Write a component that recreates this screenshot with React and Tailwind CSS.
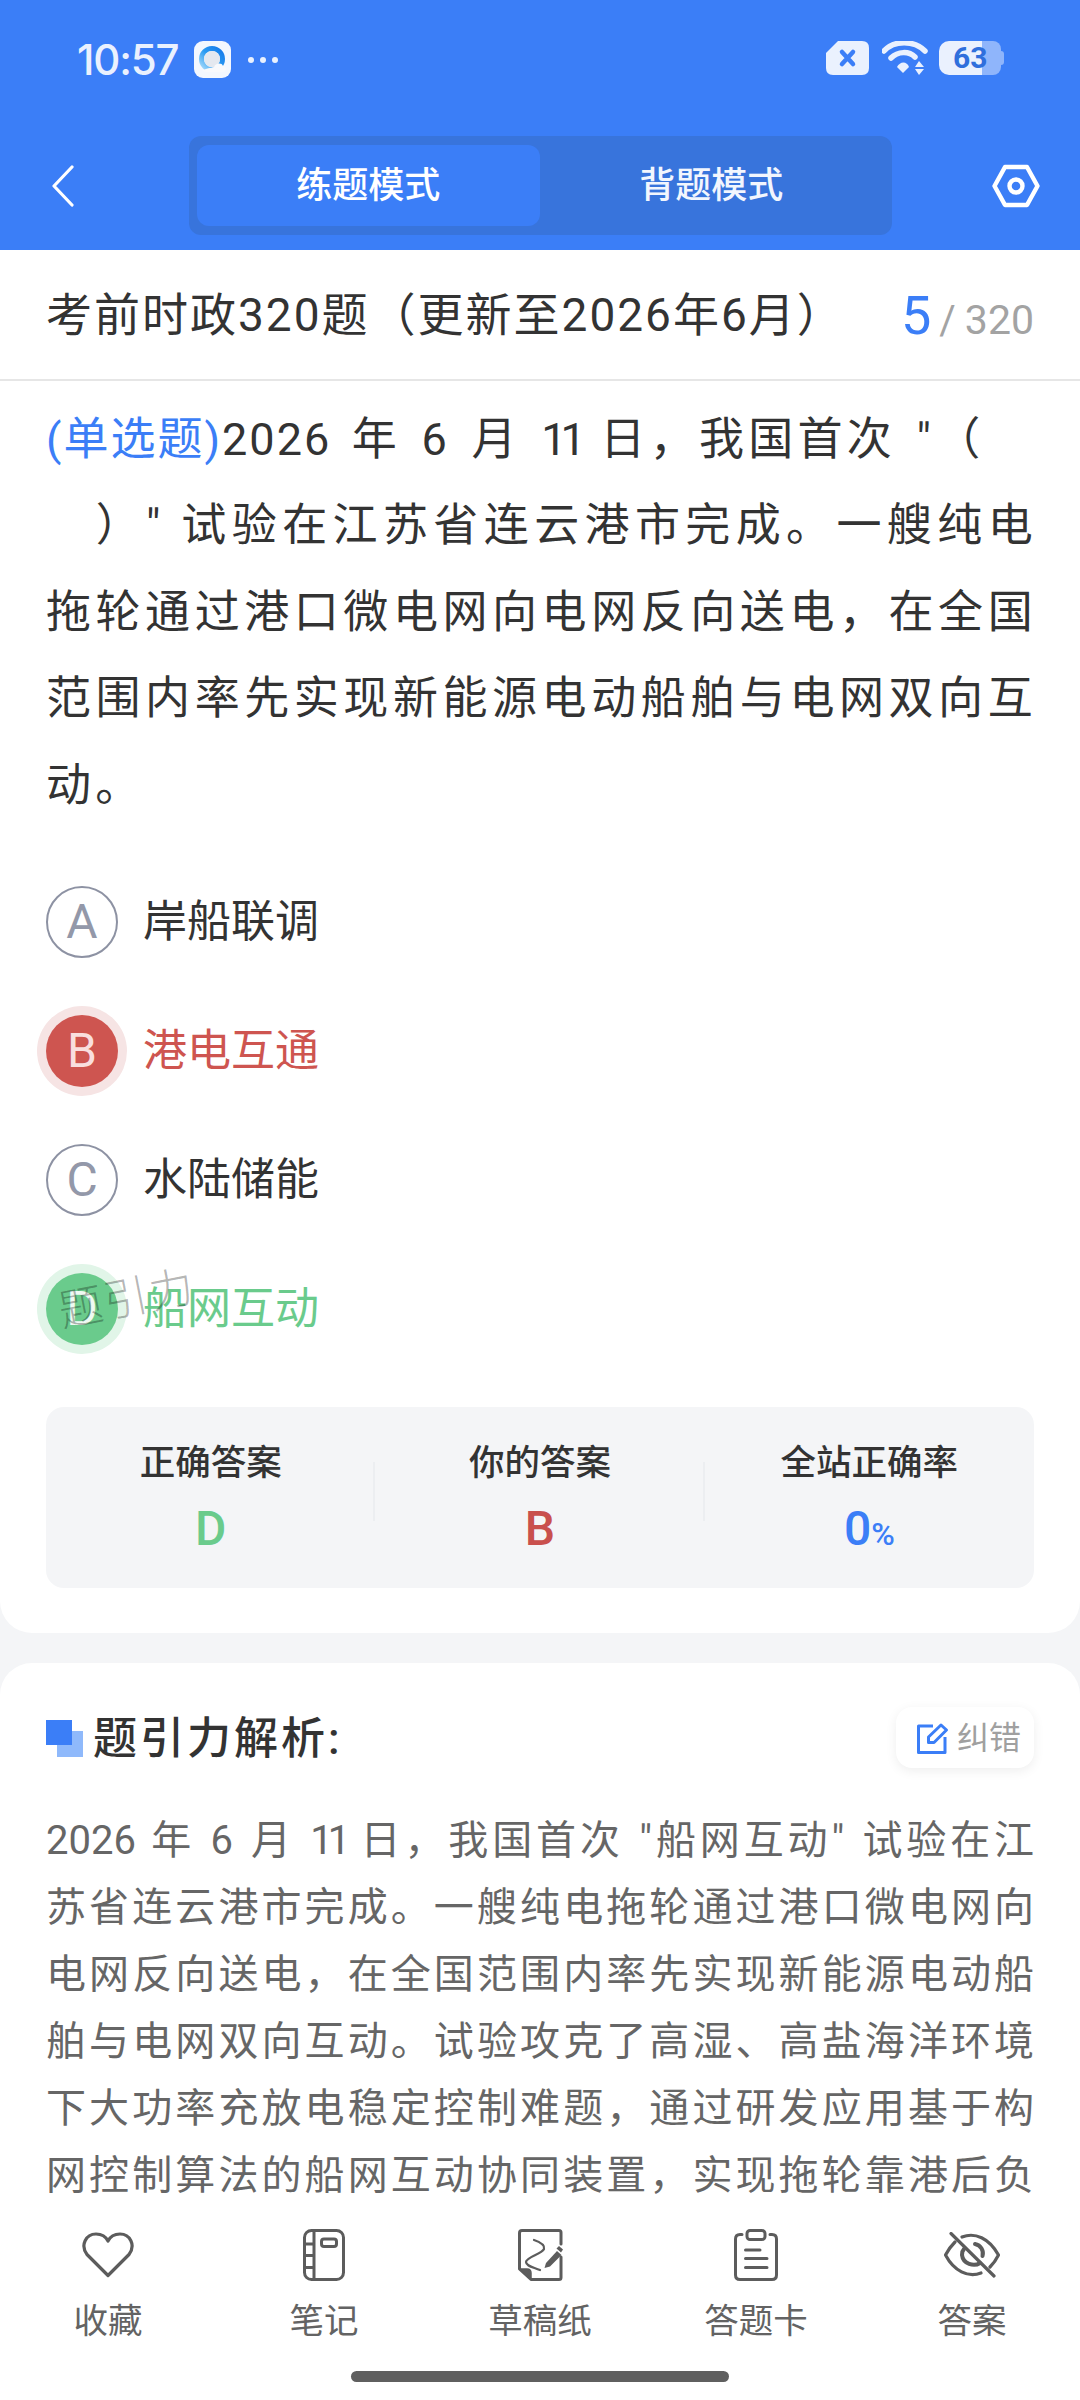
import React from 'react';

const FONT = "font-['Roboto','Noto_Sans_CJK_SC',sans-serif]";

function QQLogo() {
  return (
    <svg width="37" height="37" viewBox="0 0 37 37">
      <defs>
        <linearGradient id="ring" x1="0" y1="1" x2="1" y2="0">
          <stop offset="0" stopColor="#a9dcfb" />
          <stop offset="0.5" stopColor="#2a9bf2" />
          <stop offset="1" stopColor="#1579ea" />
        </linearGradient>
      </defs>
      <rect width="37" height="37" rx="9" fill="#f3f7fe" />
      <circle cx="18" cy="18" r="10.5" fill="none" stroke="url(#ring)" strokeWidth="5" />
      <circle cx="18" cy="18" r="8" fill="#e4e8ef" />
      <path d="M8 30 C12 27 17 27 20 26 C21 22 28 21 29 25 C33 25 33 31 29 31 L12 31 Z" fill="#f8f9fc" />
    </svg>
  );
}

function StatusRight() {
  return (
    <div className="flex items-center">
      <svg width="43" height="34" viewBox="0 0 43 34">
        <path d="M12 0 H36 Q43 0 43 7 V27 Q43 34 36 34 H7 Q0 34 0 27 V12 Z" fill="#eaf1fe" />
        <path d="M16 11 L27 23 M27 11 L16 23" stroke="#3b7ef7" strokeWidth="4.5" strokeLinecap="round" />
      </svg>
      <svg className="ml-[13px]" width="46" height="34" viewBox="0 0 46 34" fill="none">
        <path d="M2 10 C12 -1 32 -1 43 10" stroke="#eaf1fe" strokeWidth="5.5" strokeLinecap="round" />
        <path d="M9 17 C16 10 27 10 33 16" stroke="#eaf1fe" strokeWidth="5.5" strokeLinecap="round" />
        <path d="M15 26 C18 20 25 20 27 26 L21 32 Z" fill="#eaf1fe" />
        <path d="M37 20 L42 26 H33 Z M33 28 H42 L37 34 Z" fill="#eaf1fe" />
      </svg>
      <div className="relative ml-[11px] flex h-[34px] w-[65px] items-center">
        <div className="h-full w-[43px] rounded-l-[10px] bg-[#eaf1fe]" />
        <div className="h-full w-[19px] rounded-r-[8px] bg-[#8fb5fb]" />
        <div className="h-[14px] w-[3px] rounded-r-sm bg-[#8fb5fb]" />
        <span className="absolute left-[14px] top-0 text-[30px] leading-[34px] font-bold text-[#2f6fdc]">63</span>
      </div>
    </div>
  );
}

function HeartIcon() {
  return (
    <svg width="52" height="46" viewBox="0 0 52 46" fill="none" stroke="#5c5c5c" strokeWidth="3.2" strokeLinejoin="round">
      <path d="M26 43.5 L5 22.5 C-2 13 4 2 14 2 C20 2 24 5 26 9 C28 5 32 2 38 2 C48 2 54 13 47 22.5 Z" />
    </svg>
  );
}

function NotebookIcon() {
  return (
    <svg width="42" height="52" viewBox="0 0 42 52" fill="none" stroke="#5c5c5c" strokeWidth="3">
      <rect x="1.5" y="1.5" width="39" height="49" rx="7" />
      <path d="M11 2 V50 M2 15 H11 M2 26.5 H11 M2 38.5 H11" />
      <rect x="18.5" y="10" width="15" height="7.5" rx="2.5" />
    </svg>
  );
}

function DraftIcon() {
  return (
    <svg width="45" height="52" viewBox="0 0 45 52" fill="none" stroke="#5c5c5c" strokeWidth="3" strokeLinecap="round" strokeLinejoin="round">
      <path d="M43 15 V3.5 Q43 1.5 41 1.5 H4 Q1.5 1.5 1.5 4 V40 L13 50.5 H41 Q43 50.5 43 48.5 V28" />
      <path d="M1.5 40 H9 Q13 40 13 44 V50.5 Z" fill="#5c5c5c" strokeWidth="1.5" />
      <path d="M16 11 C22 13 27 16 26 20 C24 25 8 28 8 33 C8 37 15 38 22 41" strokeWidth="2.2" />
      <path d="M28 34 L39 22 L43.5 26 L32 37.5 L26.5 39 Z" fill="#5c5c5c" stroke="none" />
      <path d="M38.5 19.5 L41 17 L45 20.5 L43 23.5 Z" fill="#5c5c5c" stroke="none" />
    </svg>
  );
}

function ClipboardIcon() {
  return (
    <svg width="44" height="52" viewBox="0 0 44 52" fill="none" stroke="#5c5c5c" strokeWidth="3" strokeLinecap="round">
      <rect x="13" y="1.5" width="18" height="9" rx="3" />
      <path d="M8 5.5 H6 Q1.5 5.5 1.5 10 V46 Q1.5 50.5 6 50.5 H38 Q42.5 50.5 42.5 46 V10 Q42.5 5.5 38 5.5 H36" />
      <path d="M11.5 21 H26 M11.5 29.5 H33 M11.5 38.5 H33" />
    </svg>
  );
}

function EyeOffIcon() {
  return (
    <svg width="56" height="46" viewBox="0 0 56 46" fill="none" stroke="#5c5c5c" strokeWidth="3.2" strokeLinecap="round" strokeLinejoin="round">
      <path d="M18 5 C31 -0 45 6 54.5 23 C52 28 49 32 46 35 M37 41 C24 46 10 39 1.5 23 C4 18 7 14 11 10" />
      <path d="M31 12 C37 13 40 19 38.5 24 M36 31 C30 35 19 32 18 23 C18 20 19 18 20 17" strokeWidth="4" />
      <path d="M7 1.5 L50 44" />
    </svg>
  );
}

function EditIcon() {
  return (
    <svg width="32" height="32" viewBox="0 0 32 32" fill="none" stroke="#3b7ef7" strokeWidth="3" strokeLinejoin="round">
      <path d="M16 4 H1.5 V30.5 H28 V15" />
      <path d="M11.5 15 L24 3 L29.5 8 L17 20.5 H11.5 Z" />
    </svg>
  );
}

function Option({ letter, text, state }) {
  let circle = 'border-2 border-[#8d92a3] text-[#9398a9] bg-white';
  let label = 'text-[#333333]';
  if (state === 'wrong') {
    circle = 'bg-[#ce5550] text-[#f9dede] ring-[9px] ring-[#f6e4e4]';
    label = 'text-[#ce5550]';
  }
  if (state === 'right') {
    circle = 'bg-[#6acb8c] text-[#eefaf2] ring-[9px] ring-[#e1f5e8]';
    label = 'text-[#6acb8c]';
  }
  return (
    <div className="flex h-[129px] items-center">
      <div className={`flex h-[72px] w-[72px] items-center justify-center rounded-full text-[48px] ${circle}`}>
        {letter}
      </div>
      <span className={`ml-[25px] text-[44px] ${label}`}>{text}</span>
    </div>
  );
}

function Stat({ label, children, divider }) {
  return (
    <div className="relative flex flex-col items-center">
      <div className="text-[35.5px] leading-[46px] font-medium text-[#333333]">{label}</div>
      <div className="mt-[18px] h-[50px] text-[48px] leading-[50px] font-medium">{children}</div>
      {divider && <div className="absolute right-0 top-[22px] h-[59px] w-[2px] bg-[#eceef1]" />}
    </div>
  );
}

function TabItem({ icon, label }) {
  return (
    <div className="flex flex-col items-center">
      <div className="flex h-[56px] items-center justify-center">{icon}</div>
      <span className="mt-[15px] text-[34.5px] leading-[46px] text-[#636363]">{label}</span>
    </div>
  );
}

export default function App() {
  return (
    <div className={`relative flex h-[2400px] w-[1080px] flex-col overflow-hidden bg-[#f4f5f7] ${FONT}`}>
      {/* header */}
      <header className="h-[250px] shrink-0 bg-[#3b7ef7]">
        <div className="flex h-[136px] items-start justify-between pl-[77px] pr-[76px] pt-[41px]">
          <div className="flex h-[37px] items-center">
            <span className="font-['Inter',sans-serif] text-[42px] font-medium tracking-[-1.2px] text-[#eaf1fe]">10:57</span>
            <div className="ml-[16px] flex"><QQLogo /></div>
            <div className="ml-[17px] flex gap-[6px]">
              <div className="h-[6px] w-[6px] rounded-full bg-[#eaf1fe]" />
              <div className="h-[6px] w-[6px] rounded-full bg-[#eaf1fe]" />
              <div className="h-[6px] w-[6px] rounded-full bg-[#eaf1fe]" />
            </div>
          </div>
          <StatusRight />
        </div>
        <div className="flex h-[99px] items-center">
          <svg className="ml-[52px]" width="22" height="42" viewBox="0 0 22 42" fill="none" stroke="#ffffff" strokeWidth="3.2" strokeLinecap="round" strokeLinejoin="round">
            <path d="M20 2 L2 21 L20 40" />
          </svg>
          <div className="ml-[115px] flex h-[99px] w-[703px] rounded-[12px] bg-[#3874dc] p-[9px] pl-[8px]">
            <div className="flex w-[343px] items-center justify-center rounded-[12px] bg-[#3b7ef7] text-[36px] font-medium text-white">练题模式</div>
            <div className="flex w-[344px] items-center justify-center text-[36px] font-medium text-[#f2f6fe]">背题模式</div>
          </div>
          <svg className="ml-[100px]" width="48" height="44" viewBox="0 0 48 44" fill="none" stroke="#ffffff" strokeWidth="4.4" strokeLinejoin="round">
            <path d="M13 3 H35 L45.5 22 L35 41 H13 L2.5 22 Z" />
            <circle cx="24" cy="22" r="6.5" />
          </svg>
        </div>
      </header>

      <main className="min-h-0 flex-1 overflow-hidden">
        {/* question card */}
        <section className="rounded-b-[32px] bg-white">
          <div className="flex h-[131px] items-center justify-between border-b-2 border-[#e6e6e6] px-[46px] pt-[2px]">
            <h1 className="text-[46px] font-normal tracking-[2px] text-[#333333]">考前时政320题（更新至2026年6月）</h1>
            <div className="flex items-baseline">
              <span className="text-[54px] text-[#3b7ef7]">5</span>
              <span className="ml-[8px] text-[40px] text-[#a3a3a3]">/</span>
              <span className="ml-[9px] text-[41px] text-[#a3a3a3]">320</span>
            </div>
          </div>

          <div className="px-[46px] pt-[16px]">
            <p className="-mr-[3px] text-justify text-[45px] leading-[86.4px] tracking-[4.3px] text-[#333333]">
              <span className="tracking-[2px] text-[#3b7ef7]">(单选题)</span>
              <span className="[word-spacing:5px]"><span className="tracking-[2px]">2026</span> 年 6 月 <span className="tracking-[-6px]">11</span> 日，我国首次 "（</span>
              <br />
              {'\u00A0\u00A0\u00A0'}）" 试验在江苏省连云港市完成。一艘纯电拖轮通过港口微电网向电网反向送电，在全国范围内率先实现新能源电动船舶与电网双向互动。
            </p>

            <div className="mt-[28px]">
              <Option letter="A" text="岸船联调" />
              <Option letter="B" text="港电互通" state="wrong" />
              <Option letter="C" text="水陆储能" />
              <Option letter="D" text="船网互动" state="right" />
            </div>

            <div className="mt-[34px] grid h-[181px] grid-cols-3 rounded-[18px] bg-[#f4f5f7] pt-[33px]">
              <Stat label="正确答案" divider><span className="text-[#6acb8c]">D</span></Stat>
              <Stat label="你的答案" divider><span className="text-[#c9504d]">B</span></Stat>
              <Stat label="全站正确率">
                <span className="text-[#3b7ef7]">0<span className="text-[32px]">%</span></span>
              </Stat>
            </div>
          </div>
          <div className="h-[45px]" />
        </section>

        {/* analysis card */}
        <section className="mt-[30px] rounded-t-[32px] bg-white px-[46px] pt-[44px]">
          <div className="flex h-[61px] items-center justify-between">
            <div className="flex items-center pt-[2px]">
              <div className="relative h-[37px] w-[37px]">
                <div className="absolute bottom-0 right-0 h-[26px] w-[26px] bg-[#8fb9fb]" />
                <div className="absolute left-0 top-0 h-[25px] w-[26px] bg-[#3b7ef7]" />
              </div>
              <h2 className="ml-[10px] text-[44px] font-medium tracking-[3px] text-[#333333]">题引力解析:</h2>
            </div>
            <button className="flex h-[61px] w-[138px] items-center rounded-[16px] bg-white pl-[21px] shadow-[0_3px_12px_rgba(0,0,0,0.07)]">
              <EditIcon />
              <span className="ml-[8px] text-[32px] text-[#a0a0a0]">纠错</span>
            </button>
          </div>
          <p className="-mr-[3px] mt-[39px] text-justify text-[40px] leading-[67px] tracking-[2.9px] text-[#666666] [text-align-last:justify]">
            <span className="[word-spacing:1.5px]"><span className="tracking-normal">2026</span> 年 6 月 <span className="tracking-[-5px]">11</span> 日，我国首次 "船网互动" 试验在江</span>苏省连云港市完成。一艘纯电拖轮通过港口微电网向电网反向送电，在全国范围内率先实现新能源电动船舶与电网双向互动。试验攻克了高湿、高盐海洋环境下大功率充放电稳定控制难题，通过研发应用基于构网控制算法的船网互动协同装置，实现拖轮靠港后负
          </p>
        </section>
      </main>

      {/* bottom toolbar */}
      <footer className="h-[200px] shrink-0 bg-white pt-[27px]">
        <div className="grid grid-cols-5">
          <TabItem icon={<HeartIcon />} label="收藏" />
          <TabItem icon={<NotebookIcon />} label="笔记" />
          <TabItem icon={<DraftIcon />} label="草稿纸" />
          <TabItem icon={<ClipboardIcon />} label="答题卡" />
          <TabItem icon={<EyeOffIcon />} label="答案" />
        </div>
        <div className="mx-auto mt-[27px] h-[11px] w-[378px] rounded-full bg-[#5f5f5f]" />
      </footer>

      {/* watermark */}
      <div className="pointer-events-none absolute left-[58px] top-[1266px] -rotate-[11deg] text-[44px] font-light tracking-[2px] text-black/30">
        题引力
      </div>
    </div>
  );
}
